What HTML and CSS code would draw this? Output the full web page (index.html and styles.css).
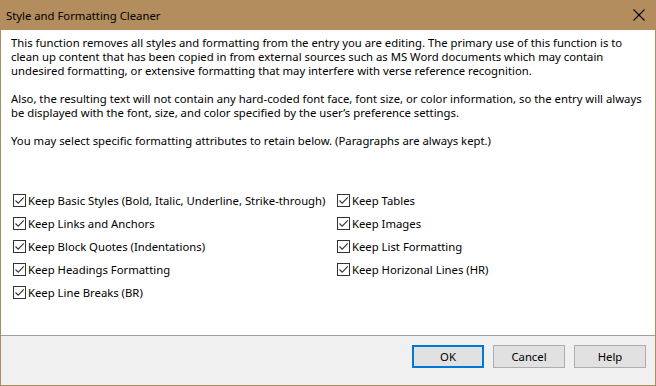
FILE: index.html
```html
<!DOCTYPE html>
<html>
<head>
<meta charset="utf-8">
<link rel="stylesheet" href="styles.css">
</head>
<body>
<div class="dialog">
  <div class="titlebar">
    <span class="title">Style and Formatting Cleaner</span>
    <svg class="close" width="12" height="12" viewBox="0 0 12 12"><path d="M0.5 0.5 L11.5 11.5 M11.5 0.5 L0.5 11.5" stroke="#000" stroke-width="1.1" fill="none"/></svg>
  </div>
  <div class="content">
    <p class="para">This function removes all styles and formatting from the entry you are editing. The primary use of this function is to clean up content that has been copied in from external sources such as MS Word documents which may contain undesired formatting, or extensive formatting that may interfere with verse reference recognition.</p>
    <p class="para">Also, the resulting text will not contain any hard-coded font face, font size, or color information, so the entry will always be displayed with the font, size, and color specified by the user’s preference settings.</p>
    <p class="para">You may select specific formatting attributes to retain below. (Paragraphs are always kept.)</p>
    <div class="options">
      <div class="col col-left">
        <label class="opt"><span class="box"><svg width="11" height="11" viewBox="0 0 11 11"><path d="M1.5 5.5 L4.2 8.2 L9.8 2.4" stroke="#333" stroke-width="1.1" fill="none"/></svg></span>Keep Basic Styles (Bold, Italic, Underline, Strike-through)</label>
        <label class="opt"><span class="box"><svg width="11" height="11" viewBox="0 0 11 11"><path d="M1.5 5.5 L4.2 8.2 L9.8 2.4" stroke="#333" stroke-width="1.1" fill="none"/></svg></span>Keep Links and Anchors</label>
        <label class="opt"><span class="box"><svg width="11" height="11" viewBox="0 0 11 11"><path d="M1.5 5.5 L4.2 8.2 L9.8 2.4" stroke="#333" stroke-width="1.1" fill="none"/></svg></span>Keep Block Quotes (Indentations)</label>
        <label class="opt"><span class="box"><svg width="11" height="11" viewBox="0 0 11 11"><path d="M1.5 5.5 L4.2 8.2 L9.8 2.4" stroke="#333" stroke-width="1.1" fill="none"/></svg></span>Keep Headings Formatting</label>
        <label class="opt"><span class="box"><svg width="11" height="11" viewBox="0 0 11 11"><path d="M1.5 5.5 L4.2 8.2 L9.8 2.4" stroke="#333" stroke-width="1.1" fill="none"/></svg></span>Keep Line Breaks (BR)</label>
      </div>
      <div class="col col-right">
        <label class="opt"><span class="box"><svg width="11" height="11" viewBox="0 0 11 11"><path d="M1.5 5.5 L4.2 8.2 L9.8 2.4" stroke="#333" stroke-width="1.1" fill="none"/></svg></span>Keep Tables</label>
        <label class="opt"><span class="box"><svg width="11" height="11" viewBox="0 0 11 11"><path d="M1.5 5.5 L4.2 8.2 L9.8 2.4" stroke="#333" stroke-width="1.1" fill="none"/></svg></span>Keep Images</label>
        <label class="opt"><span class="box"><svg width="11" height="11" viewBox="0 0 11 11"><path d="M1.5 5.5 L4.2 8.2 L9.8 2.4" stroke="#333" stroke-width="1.1" fill="none"/></svg></span>Keep List Formatting</label>
        <label class="opt"><span class="box"><svg width="11" height="11" viewBox="0 0 11 11"><path d="M1.5 5.5 L4.2 8.2 L9.8 2.4" stroke="#333" stroke-width="1.1" fill="none"/></svg></span>Keep Horizonal Lines (HR)</label>
      </div>
    </div>
  </div>
  <div class="footer">
    <button class="btn btn-default">OK</button>
    <button class="btn">Cancel</button>
    <button class="btn">Help</button>
  </div>
</div>
</body>
</html>
```

FILE: styles.css
```css
html, body {
  margin: 0;
  padding: 0;
}
body {
  width: 656px;
  height: 386px;
  overflow: hidden;
  font-family: "Noto Sans", "DejaVu Sans", sans-serif;
  font-size: 11.3px;
  color: #000;
}
.dialog {
  box-sizing: border-box;
  width: 656px;
  height: 386px;
  border: 1px solid #b08d5d;
  border-top: none;
  display: flex;
  flex-direction: column;
  background: #fff;
}
.titlebar {
  height: 30px;
  background: #b38d5d;
  margin: 0 -1px;
  display: flex;
  align-items: center;
  justify-content: space-between;
  padding: 0 11px 0 6px;
  flex: none;
}
.title {
  font-size: 11.3px;
  color: #000;
}
.close {
  display: block;
}
.content {
  flex: 1;
  padding: 6px 10px 0 10px;
}
.para {
  margin: 0 0 14px 0;
  line-height: 14px;
}
.options {
  display: flex;
  margin-top: 45px;
}
.col {
  display: flex;
  flex-direction: column;
  gap: 8px;
}
.col-left {
  width: 324px;
}
.opt {
  display: flex;
  align-items: center;
  height: 15px;
  white-space: nowrap;
}
.box {
  box-sizing: border-box;
  width: 13px;
  height: 13px;
  border: 1px solid #333;
  background: #fff;
  margin-right: 2px;
  display: flex;
  align-items: center;
  justify-content: center;
  margin-left: 2px;
}
.box svg {
  display: block;
}
.footer {
  flex: none;
  height: 40px;
  background: #f0f0f0;
  border-top: 1px solid #a0a0a0;
  display: flex;
  justify-content: flex-end;
  align-items: flex-start;
  padding: 9px 9px 0 0;
  gap: 9px;
}
.btn {
  box-sizing: border-box;
  width: 72px;
  height: 23px;
  background: #e1e1e1;
  border: 1px solid #adadad;
  font-family: "Noto Sans", "DejaVu Sans", sans-serif;
  font-size: 11.3px;
  color: #000;
  padding: 0;
}
.btn-default {
  border: 2px solid #0078d7;
}
```
